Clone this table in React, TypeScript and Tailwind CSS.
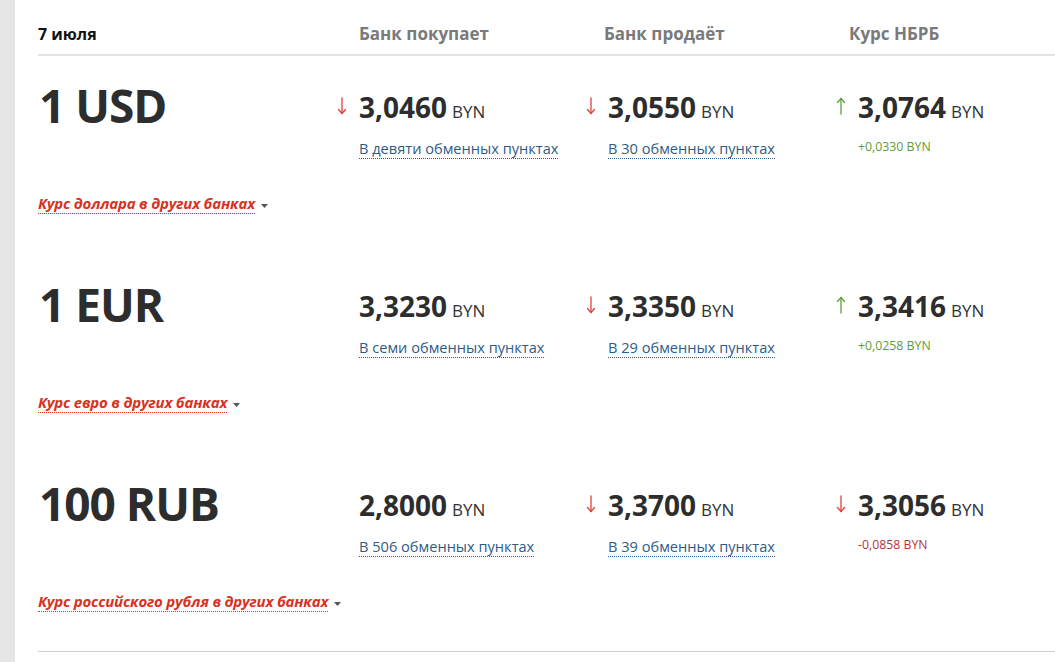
import React from "react";

type Rate = {
  value: string;
  trend?: "up" | "down";
};

type Row = {
  title: string;
  buy: Rate;
  buyPoints: string;
  sell: Rate;
  sellPoints: string;
  nb: Rate;
  nbDiff: string;
  other: string;
};

const rows: Row[] = [
  {
    title: "1 USD",
    buy: { value: "3,0460", trend: "down" },
    buyPoints: "В девяти обменных пунктах",
    sell: { value: "3,0550", trend: "down" },
    sellPoints: "В 30 обменных пунктах",
    nb: { value: "3,0764", trend: "up" },
    nbDiff: "+0,0330 BYN",
    other: "Курс доллара в других банках",
  },
  {
    title: "1 EUR",
    buy: { value: "3,3230" },
    buyPoints: "В семи обменных пунктах",
    sell: { value: "3,3350", trend: "down" },
    sellPoints: "В 29 обменных пунктах",
    nb: { value: "3,3416", trend: "up" },
    nbDiff: "+0,0258 BYN",
    other: "Курс евро в других банках",
  },
  {
    title: "100 RUB",
    buy: { value: "2,8000" },
    buyPoints: "В 506 обменных пунктах",
    sell: { value: "3,3700", trend: "down" },
    sellPoints: "В 39 обменных пунктах",
    nb: { value: "3,3056", trend: "down" },
    nbDiff: "-0,0858 BYN",
    other: "Курс российского рубля в других банках",
  },
];

const Arrow = ({ trend }: { trend?: "up" | "down" }) => {
  if (!trend) return <span className="w-[10px] shrink-0" />;
  const color = trend === "up" ? "#5aa33c" : "#e0413a";
  return (
    <svg width="10" height="20" viewBox="0 0 10 20" className="shrink-0">
      {trend === "down" ? (
        <g stroke={color} strokeWidth="1.3" fill="none" strokeLinecap="round" strokeLinejoin="round">
          <path d="M5 2 V17.5" />
          <path d="M1.5 13.5 L5 17.5 L8.5 13.5" />
        </g>
      ) : (
        <g stroke={color} strokeWidth="1.3" fill="none" strokeLinecap="round" strokeLinejoin="round">
          <path d="M5 2.5 V18" />
          <path d="M1.5 6.5 L5 2.5 L8.5 6.5" />
        </g>
      )}
    </svg>
  );
};

const Value = ({ rate }: { rate: Rate }) => (
  <div className="flex items-start -ml-[22px]">
    <div className="pt-[3px] mr-[12px] flex">
      <Arrow trend={rate.trend} />
    </div>
    <div className="flex items-baseline">
      <span className="text-[28px] leading-[28px] font-bold text-[#2d2d2d]">{rate.value}</span>
      <span className="ml-[5px] text-[17px] text-[#333]">BYN</span>
    </div>
  </div>
);

const PointsLink = ({ text }: { text: string }) => (
  <a
    href="#"
    className="mt-[13px] self-start text-[14.6px] leading-[20px] text-[#2f5b88] border-b border-dotted border-[#2f5b88]"
  >
    {text}
  </a>
);

export default function App() {
  return (
    <div className="flex min-h-[662px] bg-white font-['Open_Sans',sans-serif]">
      <div className="w-[15px] shrink-0 bg-[#e6e6e6]" />
      <div className="flex-1 pl-[23px]">
        <div className="grid grid-cols-[321px_245px_245px_1fr] h-[56px] pt-[23px] border-b-2 border-[#e4e4e4] text-[17px] leading-[22px] font-bold">
          <div className="text-[#111] text-[16px]">7 июля</div>
          <div className="text-[#7a7a7a]">Банк покупает</div>
          <div className="text-[#7a7a7a]">Банк продаёт</div>
          <div className="text-[#7a7a7a]">Курс НБРБ</div>
        </div>

        {rows.map((row, i) => (
          <div
            key={row.title}
            className={i === rows.length - 1 ? "pb-[40px] border-b border-[#cfcfcf]" : "pb-[42px]"}
          >
            <div className="grid grid-cols-[321px_249px_250px_1fr] h-[137px]">
              <div className="pt-[26px] pl-[1px] text-[46px] leading-[46px] font-bold tracking-[-1px] text-[#2d2d2d]">
                {row.title}
              </div>
              <div className="pt-[37px] flex flex-col">
                <Value rate={row.buy} />
                <PointsLink text={row.buyPoints} />
              </div>
              <div className="pt-[37px] flex flex-col">
                <Value rate={row.sell} />
                <PointsLink text={row.sellPoints} />
              </div>
              <div className="pt-[37px] flex flex-col">
                <Value rate={row.nb} />
                <div
                  className={
                    "mt-[14px] text-[12.3px] leading-[16px] " +
                    (row.nb.trend === "up" ? "text-[#5a9e35]" : "text-[#b3343a]")
                  }
                >
                  {row.nbDiff}
                </div>
              </div>
            </div>
            <div className="flex items-center h-[20px]">
              <a
                href="#"
                className="text-[15px] leading-[20px] italic font-bold text-[#d8321f] border-b border-dotted border-[#d8321f] tracking-[-0.2px]"
              >
                {row.other}
              </a>
              <svg width="7" height="4" viewBox="0 0 7 4" className="ml-[6px] mt-[5px]">
                <path d="M0 0 H7 L3.5 4 Z" fill="#555" />
              </svg>
            </div>
          </div>
        ))}
      </div>
    </div>
  );
}
